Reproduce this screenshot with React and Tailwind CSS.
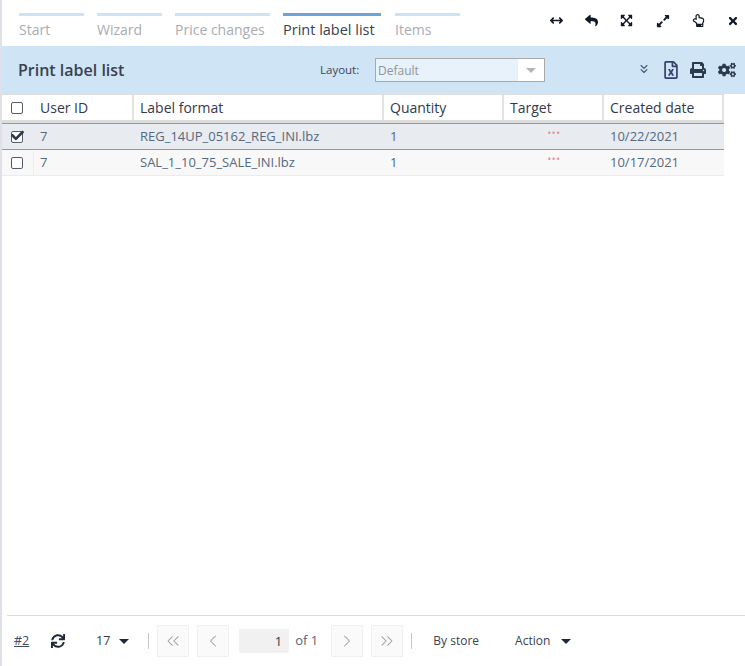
import React from "react";
import { FaReply, FaTimes, FaExpandArrowsAlt, FaExpandAlt, FaRegHandPointUp, FaRegFileExcel, FaPrint, FaCogs, FaSync, FaCheck } from "react-icons/fa";
import { FaArrowsLeftRight } from "react-icons/fa6";
import { ChevronLeft, ChevronRight, ChevronsLeft, ChevronsRight, ChevronsDown } from "lucide-react";

const tabs = [
  { t: "Start", w: "w-[65px]" },
  { t: "Wizard", w: "w-[65px]" },
  { t: "Price changes", w: "w-[95px]" },
  { t: "Print label list", w: "w-[98px]", active: true },
  { t: "Items", w: "w-[65px]" },
];

function Box({ checked }) {
  return (
    <span className="relative block w-[12px] h-[12px] border-[1.5px] border-[#555b66] rounded-[2px] bg-white">
      {checked && <FaCheck className="absolute left-[-1px] top-[-3px] text-[13px] text-[#2b3a4f]" />}
    </span>
  );
}

const Caret = ({ color = "#1f2937", cls = "" }) => (
  <svg width="10" height="5" viewBox="0 0 10 5" className={cls}><polygon points="0,0 10,0 5,5" fill={color} /></svg>
);

const H = ({ w, children }) => (
  <div className={`${w} h-full border-r-2 border-[#e3e3e3] pl-[6px] flex items-center text-[14px] text-[#33394a]`}>{children}</div>
);
const C = ({ w, children }) => (
  <div className={`${w} pl-[6px] text-[13px] text-[#54697f]`}>{children}</div>
);

function Row({ checked, file, date, cls }) {
  return (
    <div className={`flex items-center w-[722px] ${cls}`}>
      <div className={`w-[32px] h-full flex items-center pl-[9px] ${checked ? "" : "border-r border-[#ececec]"}`}><Box checked={checked} /></div>
      <C w="w-[100px]">7</C>
      <C w="w-[250px]">{file}</C>
      <C w="w-[120px]">1</C>
      <div className="w-[100px] text-center text-[#e98a8e] text-[10px] font-medium leading-none tracking-[0.6px] pb-[8px]">•••</div>
      <C w="w-[120px]">{date}</C>
    </div>
  );
}

function Pager({ children }) {
  return <span className="w-[32px] h-[32px] border border-[#f0f0f0] bg-[#fafafa] text-[#9a9ea6] flex items-center justify-center">{children}</span>;
}

export default function App() {
  return (
    <div className="w-[745px] h-[666px] flex flex-col bg-white border-l-2 border-[#dfe0e8] overflow-hidden font-['Open_Sans',sans-serif]">
      <div className="h-[46px] shrink-0 flex justify-between">
        <div className="flex pl-[17px] pt-[13px] gap-[13px]">
          {tabs.map((x) => (
            <div key={x.t} className={x.w + (x.active ? " mr-[1px]" : "")}>
              <div className={`h-[3px] ${x.active ? "bg-[#6ea3d8]" : "bg-[#cde3f5]"}`} />
              <div className={`leading-[20px] mt-[4px] whitespace-nowrap ${x.active ? "text-[14.5px] font-medium text-[#3a4150]" : "text-[14px] text-[#a9acb2]"}`}>{x.t}</div>
            </div>
          ))}
        </div>
        <div className="flex items-center gap-[22px] pr-[6px] pb-[5px] text-[#111827] text-[13px]">
          <FaArrowsLeftRight className="text-[13px]" />
          <FaReply />
          <FaExpandArrowsAlt />
          <FaExpandAlt className="text-[14px] ml-[1px]" />
          <FaRegHandPointUp />
          <FaTimes className="text-[12px]" />
        </div>
      </div>

      <div className="h-[48px] shrink-0 bg-[#cfe4f5] flex items-center pl-[16px] pr-[9px]">
        <div className="text-[16px] font-semibold text-[#3a4150] w-[302px]">Print label list</div>
        <div className="text-[11.5px] text-[#3f4654] w-[55px]">Layout:</div>
        <div className="w-[170px] h-[24px] border border-[#a9a9a9] flex bg-[#e8f2fb]">
          <div className="flex-1 pl-[2px] text-[12px] leading-[23px] text-[#8f949b]">Default</div>
          <div className="w-[26px] bg-white flex items-center justify-center"><Caret color="#b4b4b4" /></div>
        </div>
        <div className="flex-1" />
        <div className="flex items-center gap-[11px] text-[#2b3a4f]">
          <ChevronsDown size={14} strokeWidth={2} className="text-[#3d5a78] mb-[3px]" />
          <FaRegFileExcel className="text-[18px] text-[#33416b] mr-[-1px]" />
          <FaPrint className="text-[16px]" />
          <FaCogs className="text-[18px] ml-[1px]" />
        </div>
      </div>

      <div className="flex flex-col flex-1">
        <div className="h-[29px] w-[722px] flex items-center border-t border-[#dedede] border-b-[3px] border-b-[#dcdcdc]">
          <div className="w-[32px] pl-[9px]"><Box /></div>
          <H w="w-[100px]">User ID</H>
          <H w="w-[250px]">Label format</H>
          <H w="w-[120px]">Quantity</H>
          <H w="w-[100px]">Target</H>
          <H w="w-[120px]">Created date</H>
        </div>
        <Row checked file="REG_14UP_05162_REG_INI.lbz" date="10/22/2021" cls="h-[27px] bg-[#e8ebf0] border-t border-b border-[#6f9fd3]" />
        <Row file="SAL_1_10_75_SALE_INI.lbz" date="10/17/2021" cls="h-[26px] pt-[1px] bg-[#f8f8f8] border-b border-[#ececec]" />
      </div>

      <div className="h-[51px] shrink-0 ml-[5px] border-t border-[#d9d9d9] flex items-center text-[13px] text-[#2f3848]">
        <a className="underline text-[12.5px] ml-[7px] w-[36px] text-[#3c4a63]">#2</a>
        <FaSync className="text-[14px] text-[#1f2937] w-[16px]" />
        <span className="ml-[30px] text-[12.5px]">17</span>
        <Caret cls="ml-[9px]" />
        <span className="ml-[19px] mr-[8px] w-px h-[16px] bg-[#c8c8c8]" />
        <div className="flex gap-[8px]"><Pager><ChevronsLeft size={20} strokeWidth={1.25} /></Pager><Pager><ChevronLeft size={20} strokeWidth={1.25} /></Pager></div>
        <div className="ml-[10px] w-[50px] h-[24px] bg-[#f1f1f1] text-right pr-[7px] text-[13px] leading-[24px]">1</div>
        <span className="ml-[6px] text-[13px] text-[#5d626b] w-[36px]">of 1</span>
        <div className="flex gap-[8px]"><Pager><ChevronRight size={20} strokeWidth={1.25} /></Pager><Pager><ChevronsRight size={20} strokeWidth={1.25} /></Pager></div>
        <span className="ml-[8px] w-px h-[16px] bg-[#c8c8c8]" />
        <span className="ml-[21px] text-[12px] font-medium text-[#3a4150]">By store</span>
        <span className="ml-[36px] text-[12px] font-medium text-[#3a4150]">Action</span>
        <Caret cls="ml-[11px]" />
      </div>
    </div>
  );
}
